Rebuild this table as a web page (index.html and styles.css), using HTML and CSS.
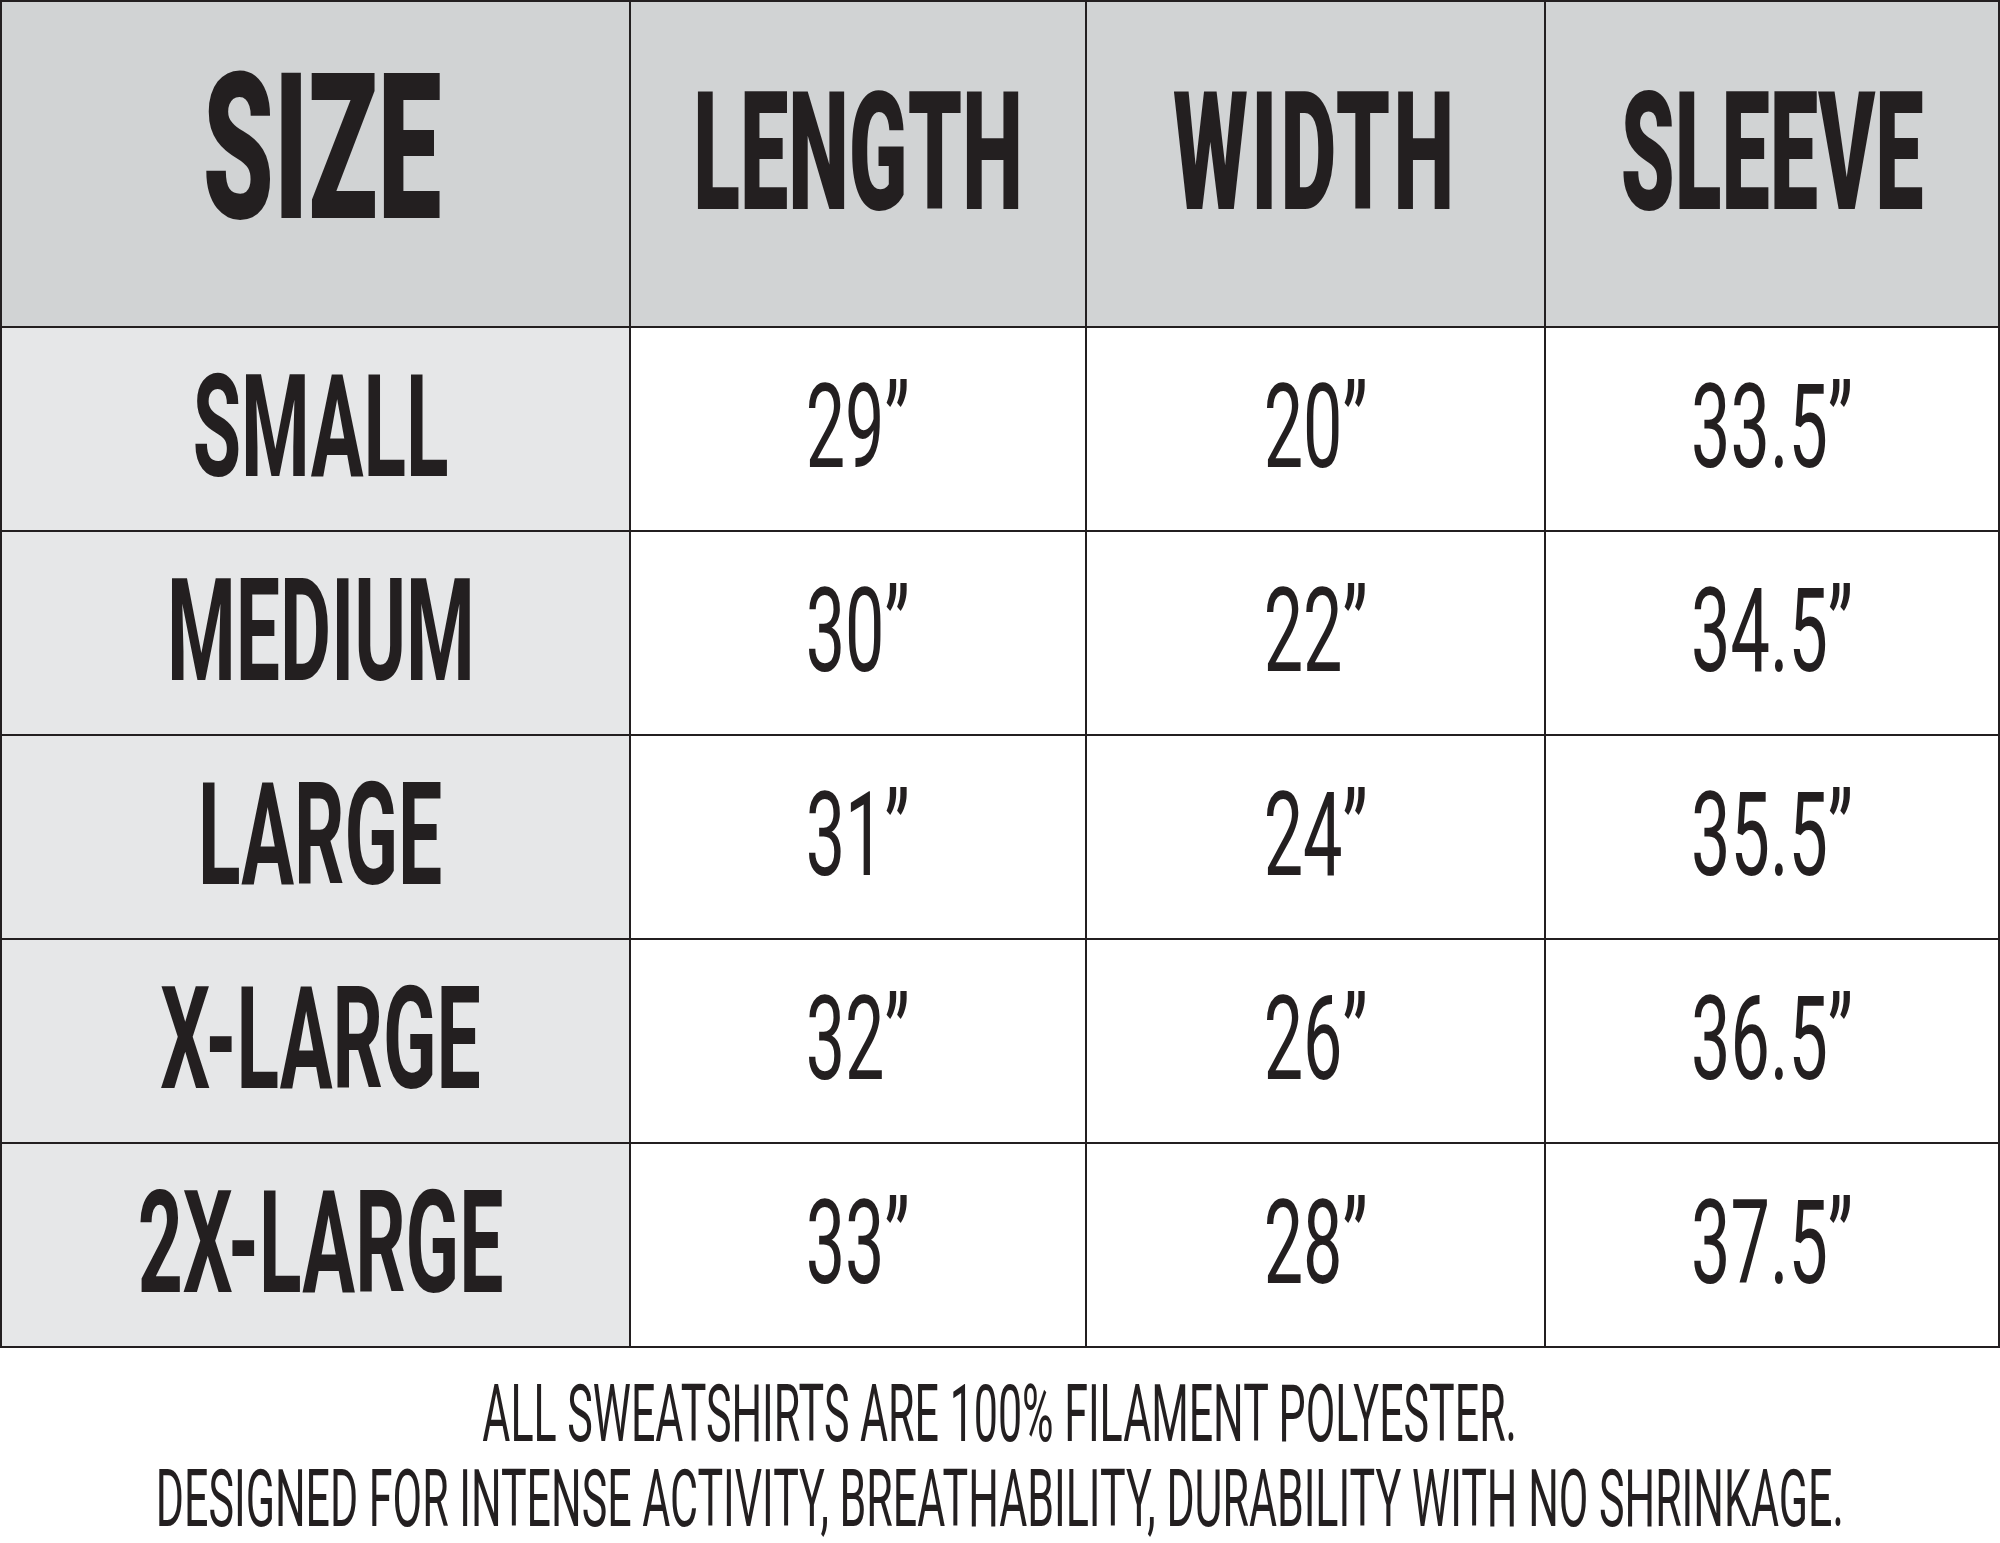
FILE: index.html
```html
<!DOCTYPE html>
<html lang="en">
<head>
<meta charset="utf-8">
<title>Sweatshirt Size Chart</title>
<link rel="stylesheet" href="styles.css">
</head>
<body>
<main class="chart">
  <div class="grid">
    <div class="cell head head-first"><span class="t t-size">SIZE</span></div>
    <div class="cell head"><span class="t t-head">LENGTH</span></div>
    <div class="cell head"><span class="t t-head t-head-wide">WIDTH</span></div>
    <div class="cell head"><span class="t t-head">SLEEVE</span></div>

    <div class="cell label"><span class="t t-label">SMALL</span></div>
    <div class="cell val"><span class="t t-val">29”</span></div>
    <div class="cell val"><span class="t t-val">20”</span></div>
    <div class="cell val"><span class="t t-val">33.5”</span></div>

    <div class="cell label"><span class="t t-label">MEDIUM</span></div>
    <div class="cell val"><span class="t t-val">30”</span></div>
    <div class="cell val"><span class="t t-val">22”</span></div>
    <div class="cell val"><span class="t t-val">34.5”</span></div>

    <div class="cell label"><span class="t t-label">LARGE</span></div>
    <div class="cell val"><span class="t t-val">31”</span></div>
    <div class="cell val"><span class="t t-val">24”</span></div>
    <div class="cell val"><span class="t t-val">35.5”</span></div>

    <div class="cell label"><span class="t t-label">X-LARGE</span></div>
    <div class="cell val"><span class="t t-val">32”</span></div>
    <div class="cell val"><span class="t t-val">26”</span></div>
    <div class="cell val"><span class="t t-val">36.5”</span></div>

    <div class="cell label"><span class="t t-label">2X-LARGE</span></div>
    <div class="cell val"><span class="t t-val">33”</span></div>
    <div class="cell val"><span class="t t-val">28”</span></div>
    <div class="cell val"><span class="t t-val">37.5”</span></div>
  </div>
  <div class="notes">
    <p class="note"><span class="t t-note">ALL SWEATSHIRTS ARE 100% FILAMENT POLYESTER.</span></p>
    <p class="note"><span class="t t-note">DESIGNED FOR INTENSE ACTIVITY, BREATHABILITY, DURABILITY WITH NO SHRINKAGE.</span></p>
  </div>
</main>
</body>
</html>
```
FILE: styles.css
```css
html, body {
  margin: 0;
  padding: 0;
  background: #ffffff;
}

.chart {
  width: 2000px;
}

.grid {
  display: grid;
  grid-template-columns: 627px 454px 457px 452px;
  grid-template-rows: 324px repeat(5, 202px);
  gap: 2px;
  padding: 2px;
  width: 2000px;
  box-sizing: border-box;
  background: #231f20;
}

.cell {
  display: flex;
  align-items: center;
  justify-content: center;
  background: #ffffff;
  overflow: hidden;
}

.head {
  background: #d1d3d4;
}

.head-first {
  padding-left: 14px;
}

.label {
  background: #e6e7e8;
  padding-left: 10px;
}

.t {
  display: inline-block;
  white-space: nowrap;
  line-height: 1;
  color: #231f20;
  font-family: Roboto, "Liberation Sans", sans-serif;
  transform-origin: center center;
}

.t-size {
  font-size: 205px;
  font-weight: 900;
  transform: scaleX(0.555);
  margin-bottom: 32px;
}

.t-head {
  font-size: 166px;
  font-weight: 900;
  transform: scaleX(0.52);
  margin-bottom: 22px;
}

.t-head-wide {
  letter-spacing: 6px;
}

.t-label {
  font-size: 143px;
  font-weight: 700;
  transform: scaleX(0.55);
  margin-bottom: 4px;
}

.t-val {
  font-size: 117px;
  font-weight: 400;
  transform: scaleX(0.6);
  margin-bottom: 4px;
}

.notes {
  padding-top: 24px;
  width: 2000px;
}

.note {
  margin: 0;
  height: 85px;
  display: flex;
  align-items: center;
  justify-content: center;
}

.t-note {
  font-size: 40px;
  font-weight: 400;
  transform: scale(1.074, 2);
}
```
